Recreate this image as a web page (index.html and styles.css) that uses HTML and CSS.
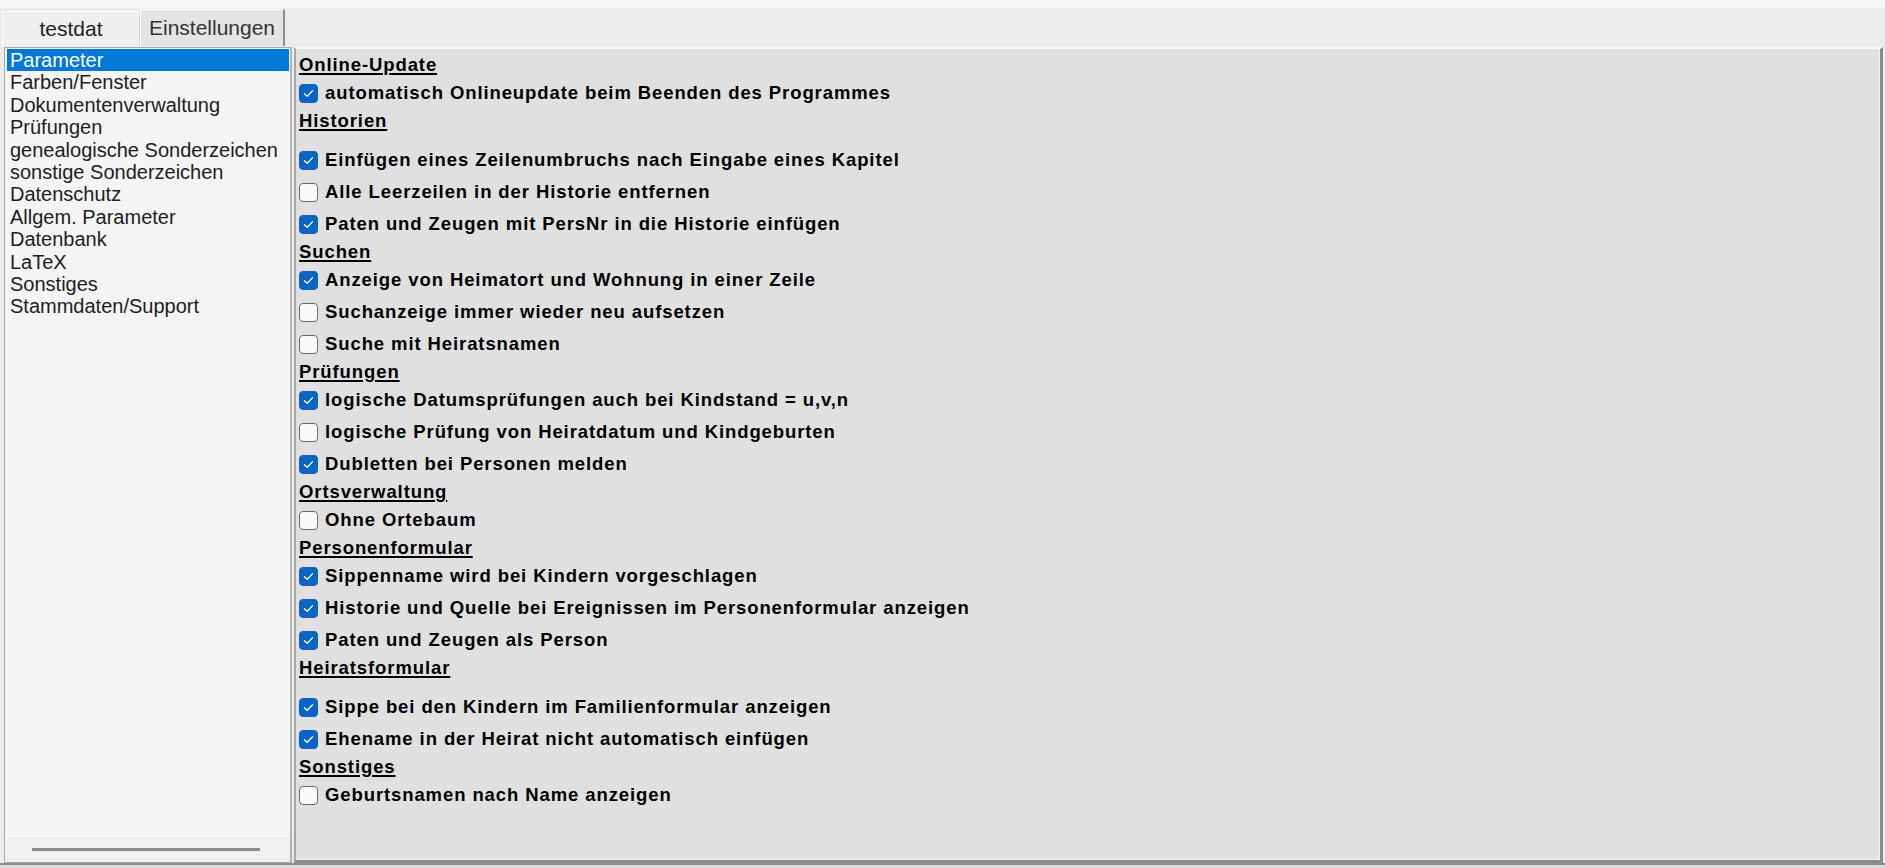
FILE: index.html
```html
<!DOCTYPE html>
<html lang="de">

<head>
    <meta charset="UTF-8">
    <meta name="viewport" content="width=device-width, initial-scale=1.0">
    <title>Einstellungen</title>
    <link rel="stylesheet" href="styles.css">
</head>

<body>
    <div class="fenster">
        <!-- obere Leiste -->
        <div class="oben"></div>

        <!-- Reiter -->
        <div class="reiter">
            <div class="tab">testdat</div>
            <div class="tab aktiv">Einstellungen</div>
        </div>

        <div class="inhalt">
            <!-- linke Liste -->
            <div class="liste">
                <ul>
                    <li class="blau">Parameter</li>
                    <li>Farben/Fenster</li>
                    <li>Dokumentenverwaltung</li>
                    <li>Prüfungen</li>
                    <li>genealogische Sonderzeichen</li>
                    <li>sonstige Sonderzeichen</li>
                    <li>Datenschutz</li>
                    <li>Allgem. Parameter</li>
                    <li>Datenbank</li>
                    <li>LaTeX</li>
                    <li>Sonstiges</li>
                    <li>Stammdaten/Support</li>
                </ul>
                <div class="scroll">
                    <div class="balken"></div>
                </div>
            </div>

            <!-- rechte Seite -->
            <div class="seite">
                <div class="titel">Online-Update</div>
                <label class="zeile"><span class="box an"></span>automatisch Onlineupdate beim Beenden des Programmes</label>

                <div class="titel luft">Historien</div>
                <label class="zeile"><span class="box an"></span>Einfügen eines Zeilenumbruchs nach Eingabe eines Kapitel</label>
                <label class="zeile"><span class="box"></span>Alle Leerzeilen in der Historie entfernen</label>
                <label class="zeile"><span class="box an"></span>Paten und Zeugen mit PersNr in die Historie einfügen</label>

                <div class="titel">Suchen</div>
                <label class="zeile"><span class="box an"></span>Anzeige von Heimatort und Wohnung in einer Zeile</label>
                <label class="zeile"><span class="box"></span>Suchanzeige immer wieder neu aufsetzen</label>
                <label class="zeile"><span class="box"></span>Suche mit Heiratsnamen</label>

                <div class="titel">Prüfungen</div>
                <label class="zeile"><span class="box an"></span>logische Datumsprüfungen auch bei Kindstand = u,v,n</label>
                <label class="zeile"><span class="box"></span>logische Prüfung von Heiratdatum und Kindgeburten</label>
                <label class="zeile"><span class="box an"></span>Dubletten bei Personen melden</label>

                <div class="titel">Ortsverwaltung</div>
                <label class="zeile"><span class="box"></span>Ohne Ortebaum</label>

                <div class="titel">Personenformular</div>
                <label class="zeile"><span class="box an"></span>Sippenname wird bei Kindern vorgeschlagen</label>
                <label class="zeile"><span class="box an"></span>Historie und Quelle bei Ereignissen im Personenformular anzeigen</label>
                <label class="zeile"><span class="box an"></span>Paten und Zeugen als Person</label>

                <div class="titel luft">Heiratsformular</div>
                <label class="zeile"><span class="box an"></span>Sippe bei den Kindern im Familienformular anzeigen</label>
                <label class="zeile"><span class="box an"></span>Ehename in der Heirat nicht automatisch einfügen</label>

                <div class="titel">Sonstiges</div>
                <label class="zeile"><span class="box"></span>Geburtsnamen nach Name anzeigen</label>
            </div>
        </div>

        <div class="unten"></div>
    </div>
</body>

</html>
```

FILE: styles.css
```css
* {
    margin: 0;
    padding: 0;
    box-sizing: border-box;
}

body {
    background-color: #ececec;
    font-family: "Liberation Sans", Arial, sans-serif;
    color: #000;
}

.fenster {
    width: 1885px;
    height: 868px;
    display: flex;
    flex-direction: column;
    overflow: hidden;
}

.oben {
    height: 8px;
    background-color: #f6f6f6;
}

/* Reiter */
.reiter {
    height: 38px;
    display: flex;
    align-items: flex-end;
    padding-left: 2px;
    background-color: #ebebeb;
}

.tab {
    height: 35px;
    width: 138px;
    text-align: center;
    font-size: 21px;
    line-height: 33px;
    color: #222;
    background-color: #efefef;
    border-top: 1px solid #fff;
    border-left: 1px solid #fff;
    border-right: 1px solid #d8d8d8;
}

.tab.aktiv {
    height: 37px;
    width: 145px;
    background-color: #e4e4e4;
    border-right: 2px solid #8c8c8c;
    color: #333;
    line-height: 36px;
}

/* Inhalt */
.inhalt {
    flex: 1;
    display: flex;
    gap: 2px;
    padding: 1px 2px 0 4px;
}

.liste {
    width: 288px;
    display: flex;
    flex-direction: column;
    background-color: #f4f4f4;
    border: 1px solid #a8a8a8;
    border-right: 2px solid #b4b4b4;
}

.liste ul {
    flex: 1;
    list-style: none;
    padding: 1px 1px 0 2px;
}

.liste li {
    height: 22.4px;
    line-height: 22.4px;
    padding-left: 3px;
    font-size: 20px;
    color: #1e1e1e;
    white-space: nowrap;
}

.liste li.blau {
    background-color: #0078d7;
    color: #fff;
}

.scroll {
    height: 26px;
    border-top: 1px solid #fff;
    background-color: #f0f0f0;
    padding: 11px 0 0 27px;
}

.balken {
    width: 228px;
    height: 3px;
    background-color: #8a8a8a;
}

.seite {
    flex: 1;
    background-color: #e0e0e0;
    border-top: 2px solid #f8f8f8;
    border-left: 2px solid #a6a6a6;
    border-right: 3px solid #8a8a8a;
    border-bottom: 3px solid #8a8a8a;
    box-shadow: inset -1px -1px 0 #f2f2f2;
    padding: 4px 0 0 3px;
}

.titel {
    height: 24px;
    line-height: 24px;
    font-size: 18.5px;
    font-weight: bold;
    letter-spacing: 0.9px;
    text-decoration: underline;
    text-decoration-thickness: 2px;
    text-underline-offset: 2px;
}

.titel.luft {
    margin-bottom: 11px;
}

.zeile {
    height: 32px;
    display: flex;
    align-items: center;
    gap: 7px;
    font-size: 18.5px;
    font-weight: bold;
    letter-spacing: 0.9px;
    white-space: nowrap;
}

.box {
    width: 19px;
    height: 19px;
    flex: none;
    border: 1px solid #6a6a6a;
    border-radius: 4px;
    background-color: #f9f9f9;
}

.box.an {
    border-color: #0a64c4;
    background-color: #0a64c4;
    background-image: url("data:image/svg+xml;utf8,<svg xmlns='http://www.w3.org/2000/svg' width='17' height='17' viewBox='0 0 17 17'><path d='M4.5 8.8 L7.2 11.4 L12.5 5.8' fill='none' stroke='white' stroke-width='1.3' stroke-linecap='round' stroke-linejoin='round'/></svg>");
    background-repeat: no-repeat;
}

.unten {
    height: 5px;
    background-color: #dadada;
    border-top: 2px solid #8c8c8c;
}
```
